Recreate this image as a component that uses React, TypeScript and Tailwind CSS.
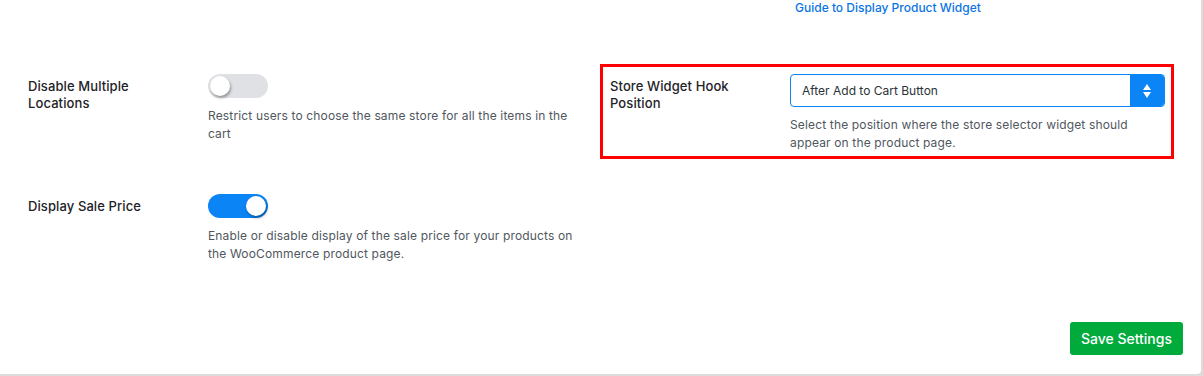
const font = { fontFamily: 'Inter, "Noto Sans", sans-serif' }

function Toggle({ on }: { on: boolean }) {
  return (
    <div
      className={`w-[60px] h-[24px] rounded-full p-[2px] flex ${
        on ? 'bg-[#0b84f5] justify-end' : 'bg-[#dfe1e5] justify-start'
      }`}
    >
      <span className="w-[20px] h-[20px] rounded-full bg-white shadow-[1px_2px_3px_rgba(0,0,0,0.35)]" />
    </div>
  )
}

function Label({ children }: { children: React.ReactNode }) {
  return (
    <div className="w-[180px] shrink-0 pt-[4px] text-[13px] leading-[17px] font-medium tracking-[0.1px] text-[#1d2327]">
      {children}
    </div>
  )
}

function Help({ children }: { children: React.ReactNode }) {
  return (
    <p className="mt-[9px] text-[12px] leading-[18px] tracking-[0.15px] text-[#50575e]">{children}</p>
  )
}

export default function App() {
  return (
    <div className="w-[1203px] h-[376px] bg-[#dcdcde]" style={font}>
      <div className="w-[1201px] h-[374px] bg-white rounded-br-[4px] flex flex-col">
        <div className="flex flex-1">
          {/* left column */}
          <div className="w-[600px] pl-[28px] pt-[74px] pr-[16px]">
            <div className="flex">
              <Label>
                Disable Multiple
                <br />
                Locations
              </Label>
              <div className="flex-1">
                <Toggle on={false} />
                <Help>
                  Restrict users to choose the same store for all the items in the
                  <br />
                  cart
                </Help>
              </div>
            </div>
            <div className="flex mt-[51px]">
              <Label>Display Sale Price</Label>
              <div className="flex-1">
                <Toggle on={true} />
                <Help>
                  Enable or disable display of the sale price for your products on the WooCommerce product page.
                </Help>
              </div>
            </div>
          </div>

          {/* right column */}
          <div className="w-[574px] flex flex-col">
            <a className="block pl-[195px] pt-[1px] text-[12px] leading-[14px] font-medium text-[#0b74e5]">
              Guide to Display Product Widget
            </a>
            <div className="mt-[49px] h-[95px] border-[3px] border-[#ff0000] pl-[7px] pr-[6px] pt-[7px] flex">
              <Label>
                Store Widget Hook
                <br />
                Position
              </Label>
              <div className="flex-1">
                <div className="h-[33px] border border-[#0b84f5] rounded-[4px] flex items-stretch overflow-hidden">
                  <span className="flex-1 pl-[11px] flex items-center text-[12px] text-[#2c3338]">
                    After Add to Cart Button
                  </span>
                  <span className="w-[34px] bg-[#0b84f5] flex items-center justify-center">
                    <svg width="10" height="16" viewBox="0 0 10 16">
                      <path d="M5 1 L9 7 H1 Z" fill="white" />
                      <path d="M5 15 L9 9 H1 Z" fill="white" />
                    </svg>
                  </span>
                </div>
                <Help>Select the position where the store selector widget should appear on the product page.</Help>
              </div>
            </div>
          </div>
        </div>
        <div className="flex justify-end pr-[18px] pb-[19px]">
          <button className="h-[33px] px-[11px] rounded-[3px] bg-[#00ab3c] text-white text-[14px] font-medium">
            Save Settings
          </button>
        </div>
      </div>
    </div>
  )
}
